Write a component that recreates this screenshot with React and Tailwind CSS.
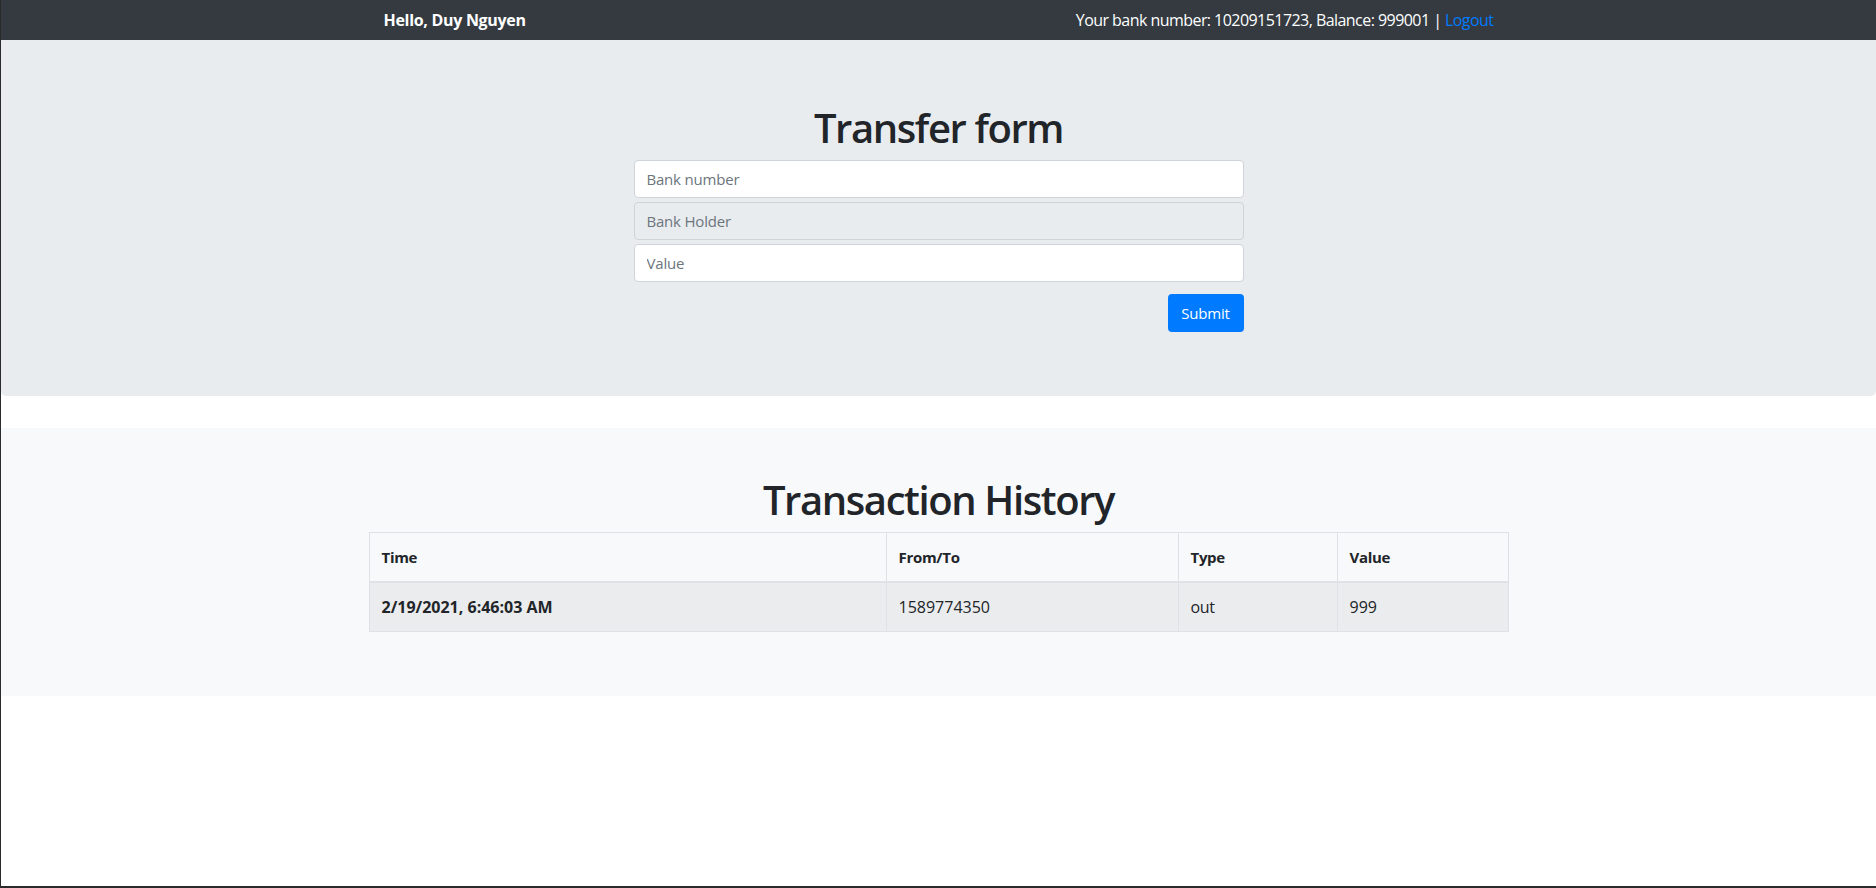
import React from 'react';

const rows = [
    { time: '2/19/2021, 6:46:03 AM', target: '1589774350', type: 'out', value: '999' },
];

const App = () => {
    return (
        <div className="h-[888px] border-l border-b-2 border-[#2b2b2b] bg-white text-[#212529] font-['Open_Sans',sans-serif] overflow-hidden">
            <nav className="h-[40px] bg-[#343a40] text-white text-[16px]">
                <div className="w-[1110px] mx-auto h-full flex items-center justify-between">
                    <span className="font-bold tracking-[-0.3px]">Hello, Duy Nguyen</span>
                    <span className="tracking-[-0.55px]">
                        Your bank number: 10209151723, Balance: 999001 | <a className="text-[#007bff]">Logout</a>
                    </span>
                </div>
            </nav>

            <div className="bg-[#e9ecef] rounded-b-[5px] pt-16 pb-16 mb-8">
                <div className="w-[610px] mx-auto">
                    <h1 className="text-[40px] leading-[48px] font-semibold text-center mb-2 tracking-[-1.4px]">Transfer form</h1>
                    <div className="flex flex-col gap-1">
                        <input placeholder="Bank number" className="h-[38px] px-3 bg-white border border-[#ced4da] rounded-[4px] text-[15px] placeholder:text-[#6c757d] tracking-[-0.2px] outline-none" />
                        <input placeholder="Bank Holder" readOnly className="h-[38px] px-3 bg-[#e9ecef] border border-[#ced4da] rounded-[4px] text-[15px] placeholder:text-[#6c757d] tracking-[-0.2px] outline-none" />
                        <input placeholder="Value" className="h-[38px] px-3 bg-white border border-[#ced4da] rounded-[4px] text-[15px] placeholder:text-[#6c757d] tracking-[-0.2px] outline-none" />
                    </div>
                    <div className="flex justify-end mt-3">
                        <button className="h-[38px] w-[76px] bg-[#007bff] text-white text-[15px] rounded-[4px] tracking-[-0.2px]">Submit</button>
                    </div>
                </div>
            </div>

            <div className="bg-[#f8f9fa] pt-12 pb-12">
                <div className="w-[1140px] mx-auto">
                    <h1 className="text-[40px] leading-[48px] font-semibold text-center mb-2 tracking-[-1.4px]">Transaction History</h1>
                    <table className="w-full border-collapse mb-4 leading-6">
                        <thead>
                            <tr className="text-[15px] tracking-[-0.3px]">
                                <th className="w-[517px] text-left font-bold px-3 py-3 border border-[#dee2e6] border-b-2">Time</th>
                                <th className="w-[292px] text-left font-bold px-3 py-3 border border-[#dee2e6] border-b-2">From/To</th>
                                <th className="w-[159px] text-left font-bold px-3 py-3 border border-[#dee2e6] border-b-2">Type</th>
                                <th className="text-left font-bold px-3 py-3 border border-[#dee2e6] border-b-2">Value</th>
                            </tr>
                        </thead>
                        <tbody>
                            {rows.map((r) => (
                                <tr key={r.time} className="bg-[#ebeced] text-[16px]">
                                    <th className="text-left font-bold px-3 py-3 border border-[#dee2e6]">{r.time}</th>
                                    <td className="px-3 py-3 border border-[#dee2e6]">{r.target}</td>
                                    <td className="px-3 py-3 border border-[#dee2e6] tracking-[-0.3px]">{r.type}</td>
                                    <td className="px-3 py-3 border border-[#dee2e6]">{r.value}</td>
                                </tr>
                            ))}
                        </tbody>
                    </table>
                </div>
            </div>
        </div>
    );
};

export default App;
